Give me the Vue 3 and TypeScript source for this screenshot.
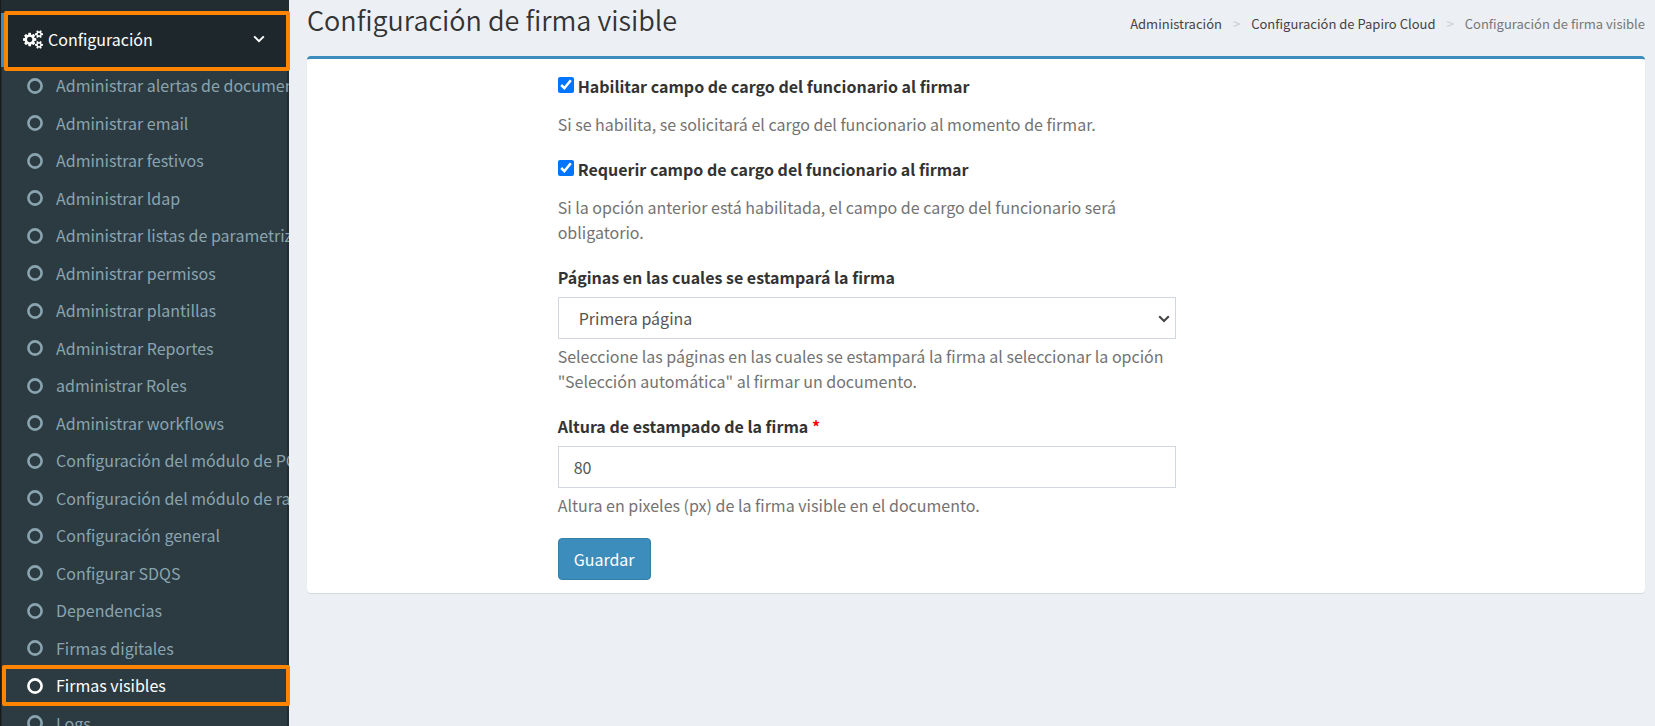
<script setup lang="ts">
import { ref } from 'vue'

const items: string[] = [
  'Administrar alertas de documentos',
  'Administrar email',
  'Administrar festivos',
  'Administrar ldap',
  'Administrar listas de parametrización',
  'Administrar permisos',
  'Administrar plantillas',
  'Administrar Reportes',
  'administrar Roles',
  'Administrar workflows',
  'Configuración del módulo de PQRS',
  'Configuración del módulo de radicación',
  'Configuración general',
  'Configurar SDQS',
  'Dependencias',
  'Firmas digitales',
  'Firmas visibles',
  'Logs',
]
const current = 'Firmas visibles'

const enableRole = ref(true)
const requireRole = ref(true)
const pages = ref('first')
const stampHeight = ref('80')
</script>

<template>
  <div class="layout">
    <aside class="sidebar">
      <nav class="menu" aria-label="Configuración">
        <button type="button" class="menu-head" aria-expanded="true">
          <svg class="cogs" viewBox="0 0 1920 1792" aria-hidden="true">
            <path
              fill="currentColor"
              d="M896 896q0-106-75-181t-181-75-181 75-75 181 75 181 181 75 181-75 75-181zm768 512q0-52-38-90t-90-38-90 38-38 90q0 53 37.500 90.500t90.500 37.500 90.500-37.500 37.500-90.500zm0-1024q0-52-38-90t-90-38-90 38-38 90q0 53 37.500 90.500t90.500 37.500 90.500-37.500 37.500-90.500zm-384 421v185q0 10-7 19.500t-16 10.500l-155 24q-11 35-32 76 34 48 90 115 7 11 7 20 0 12-7 19-23 30-82.500 89.500t-78.500 59.500q-11 0-21-7l-115-90q-37 19-77 31-11 108-23 155-7 24-30 24h-186q-11 0-20-7.500t-10-17.500l-23-153q-34-10-75-31l-118 89q-7 7-20 7-11 0-21-8-144-133-144-160 0-9 7-19 10-14 41-53t47-61q-23-44-35-82l-152-24q-10-1-17-9.500t-7-19.500v-185q0-10 7-19.500t16-10.500l155-24q11-35 32-76-34-48-90-115-7-11-7-20 0-12 7-20 22-30 82-89t79-59q11 0 21 7l115 90q34-18 77-32 11-108 23-154 7-24 30-24h186q11 0 20 7.500t10 17.500l23 153q34 10 75 31l118-89q8-7 20-7 11 0 21 8 144 133 144 160 0 8-7 19-12 16-42 54t-45 60q23 48 34 82l152 23q10 2 17 10.500t7 19.500zm640 533v140q0 16-149 31-12 27-30 52 51 113 51 138 0 4-4 7-122 71-124 71-8 0-46-47t-52-68q-20 2-30 2t-30-2q-14 21-52 68t-46 47q-2 0-124-71-4-3-4-7 0-25 51-138-18-25-30-52-149-15-149-31v-140q0-16 149-31 13-29 30-52-51-113-51-138 0-4 4-7 4-2 35-20t59-34 30-16q8 0 46 46.500t52 67.500q20-2 30-2t30 2q51-71 92-112l6-2q4 0 124 70 4 3 4 7 0 25-51 138 17 23 30 52 149 15 149 31zm0-1024v140q0 16-149 31-12 27-30 52 51 113 51 138 0 4-4 7-122 71-124 71-8 0-46-47t-52-68q-20 2-30 2t-30-2q-14 21-52 68t-46 47q-2 0-124-71-4-3-4-7 0-25 51-138-18-25-30-52-149-15-149-31v-140q0-16 149-31 13-29 30-52-51-113-51-138 0-4 4-7 4-2 35-20t59-34 30-16q8 0 46 46.500t52 67.500q20-2 30-2t30 2q51-71 92-112l6-2q4 0 124 70 4 3 4 7 0 25-51 138 17 23 30 52 149 15 149 31z"
            />
          </svg>
          <span>Configuración</span>
          <svg class="chevron" viewBox="0 0 12 8" aria-hidden="true">
            <path d="M1.200 1.400 6 6.200 10.800 1.400" fill="none" stroke="currentColor" stroke-width="2" />
          </svg>
        </button>
        <ul class="submenu">
          <li v-for="item in items" :key="item" :class="{ active: item === current }">
            <a href="#" @click.prevent>
              <svg class="ring" viewBox="0 0 16 16" aria-hidden="true">
                <circle cx="8" cy="8" r="6.600" fill="none" stroke="currentColor" stroke-width="2.600" />
              </svg>
              <span>{{ item }}</span>
            </a>
          </li>
        </ul>
      </nav>
    </aside>

    <main class="content">
      <header class="page-head">
        <h1>Configuración de firma visible</h1>
        <nav aria-label="Ruta">
          <ol class="crumbs">
            <li><a href="#" @click.prevent>Administración</a></li>
            <li><a href="#" @click.prevent>Configuración de Papiro Cloud</a></li>
            <li aria-current="page">Configuración de firma visible</li>
          </ol>
        </nav>
      </header>

      <section class="box">
        <form class="form" @submit.prevent>
          <div class="group check-group">
            <label class="check"><input v-model="enableRole" type="checkbox" /><span>Habilitar campo de cargo del funcionario al firmar</span></label>
            <p class="help">Si se habilita, se solicitará el cargo del funcionario al momento de firmar.</p>
          </div>
          <div class="group check-group">
            <label class="check"><input v-model="requireRole" type="checkbox" /><span>Requerir campo de cargo del funcionario al firmar</span></label>
            <p class="help">Si la opción anterior está habilitada, el campo de cargo del funcionario será obligatorio.</p>
          </div>
          <div class="group">
            <label class="label" for="pages">Páginas en las cuales se estampará la firma</label>
            <div class="select-wrap">
              <select id="pages" v-model="pages" class="control">
                <option value="first">Primera página</option>
              </select>
              <svg class="caret" viewBox="0 0 12 8" aria-hidden="true">
                <path d="M1.200 1.200 6 6 10.800 1.200" fill="none" stroke="currentColor" stroke-width="2" />
              </svg>
            </div>
            <p class="help">Seleccione las páginas en las cuales se estampará la firma al seleccionar la opción "Selección automática" al firmar un documento.</p>
          </div>
          <div class="group">
            <label class="label" for="height">Altura de estampado de la firma <span class="required">*</span></label>
            <input id="height" v-model="stampHeight" class="control" type="text" />
            <p class="help">Altura en pixeles (px) de la firma visible en el documento.</p>
          </div>
          <button class="save" type="submit">Guardar</button>
        </form>
      </section>
    </main>
  </div>
</template>

<style>
body {
  background: #ecf0f5;
}
</style>

<style scoped>
* {
  box-sizing: border-box;
}
.layout {
  display: flex;
  height: 100vh;
  overflow: hidden;
  background: #ecf0f5;
  color: #333;
  font-family: "Noto Sans CJK SC", "Source Sans Pro", sans-serif;
  font-size: 16px;
  line-height: 25px;
}
.sidebar {
  flex: none;
  width: 289px;
  padding-top: 13px;
  border-left: 1px solid #1a1a1a;
  background: #222d32;
}
.menu-head {
  position: relative;
  display: flex;
  align-items: center;
  width: 100%;
  height: 54px;
  padding: 0 24px 2px 19px;
  border: 0;
  border-left: 3px solid #3c8dbc;
  background: #1e282c;
  color: #fff;
  font: inherit;
  text-align: left;
}
.menu-head::after,
.active::after {
  content: "";
  position: absolute;
  inset: -2px -1px -4px 0;
  border: 4px solid #ff8400;
  border-radius: 2px;
  pointer-events: none;
}
.menu-head::after {
  z-index: 1;
}
.cogs {
  width: 20px;
  height: 19px;
  margin-right: 5px;
}
.chevron {
  width: 12px;
  height: 8px;
  margin-left: auto;
}
.submenu {
  margin: 0 2px 0 1px;
  padding: 0;
  list-style: none;
  background: #2c3b41;
}
.submenu li {
  position: relative;
  height: 38px;
}
.submenu li:nth-child(odd) {
  height: 37px;
}
.submenu a {
  display: flex;
  align-items: center;
  gap: 13px;
  height: 100%;
  margin-right: -2px;
  padding-left: 25px;
  overflow: hidden;
  color: #8aa4af;
  text-decoration: none;
  white-space: nowrap;
}
.submenu .active a {
  color: #fff;
}
.active::after {
  inset: -2px -3px -2px 0;
}
.ring {
  flex: none;
  width: 16px;
  height: 16px;
}
.content {
  flex: 1;
  min-width: 0;
  padding: 0 10px 0 18px;
}
.page-head {
  display: flex;
  justify-content: space-between;
  height: 56px;
}
h1 {
  margin: 0;
  font-family: "Noto Sans CJK SC DemiLight", "Noto Sans CJK SC", sans-serif;
  font-size: 27px;
  font-weight: 350;
  line-height: 40px;
}
.crumbs {
  display: flex;
  margin: 0;
  padding: 12px 0 0;
  list-style: none;
  color: #777;
  font-size: 13px;
  line-height: 24px;
}
.crumbs li + li::before {
  content: ">";
  padding: 0 11px;
  color: #ccc;
}
.crumbs a {
  color: #444;
  text-decoration: none;
}
.box {
  display: grid;
  grid-template-columns: 2fr 6fr 4fr;
  padding: 15px 13px 13px;
  border-top: 3px solid #3c8dbc;
  border-radius: 4px;
  background: #fff;
  box-shadow: 0 1px 1px rgba(0, 0, 0, 0.1);
}
.form {
  grid-column: 2;
  padding: 0 19px;
}
.group {
  margin-bottom: 20px;
}
.check,
.label {
  display: block;
  font-weight: 700;
}
.check {
  display: flex;
  align-items: flex-start;
}
.check input {
  width: 16px;
  height: 16px;
  margin: 3px 4px 0 0;
}
.help {
  margin: 5px 0 0;
  color: #737373;
}
.check-group .help {
  margin-top: 13px;
}
.label {
  margin-bottom: 7px;
}
.required {
  color: #f00;
}
.control {
  display: block;
  width: 100%;
  height: 42px;
  padding: 0 15px;
  border: 1px solid #d2d6de;
  border-radius: 0;
  outline: 0;
  background: #fff;
  color: #555;
  font: inherit;
}
.select-wrap {
  position: relative;
}
select.control {
  appearance: none;
  padding: 0 20px;
}
.caret {
  position: absolute;
  top: 18px;
  right: 6px;
  width: 12px;
  height: 8px;
  color: #444;
  pointer-events: none;
}
.save {
  display: block;
  height: 42px;
  padding: 0 15px;
  border: 1px solid #367fa9;
  border-radius: 4px;
  background: #3c8dbc;
  color: #fff;
  font: inherit;
}
</style>
